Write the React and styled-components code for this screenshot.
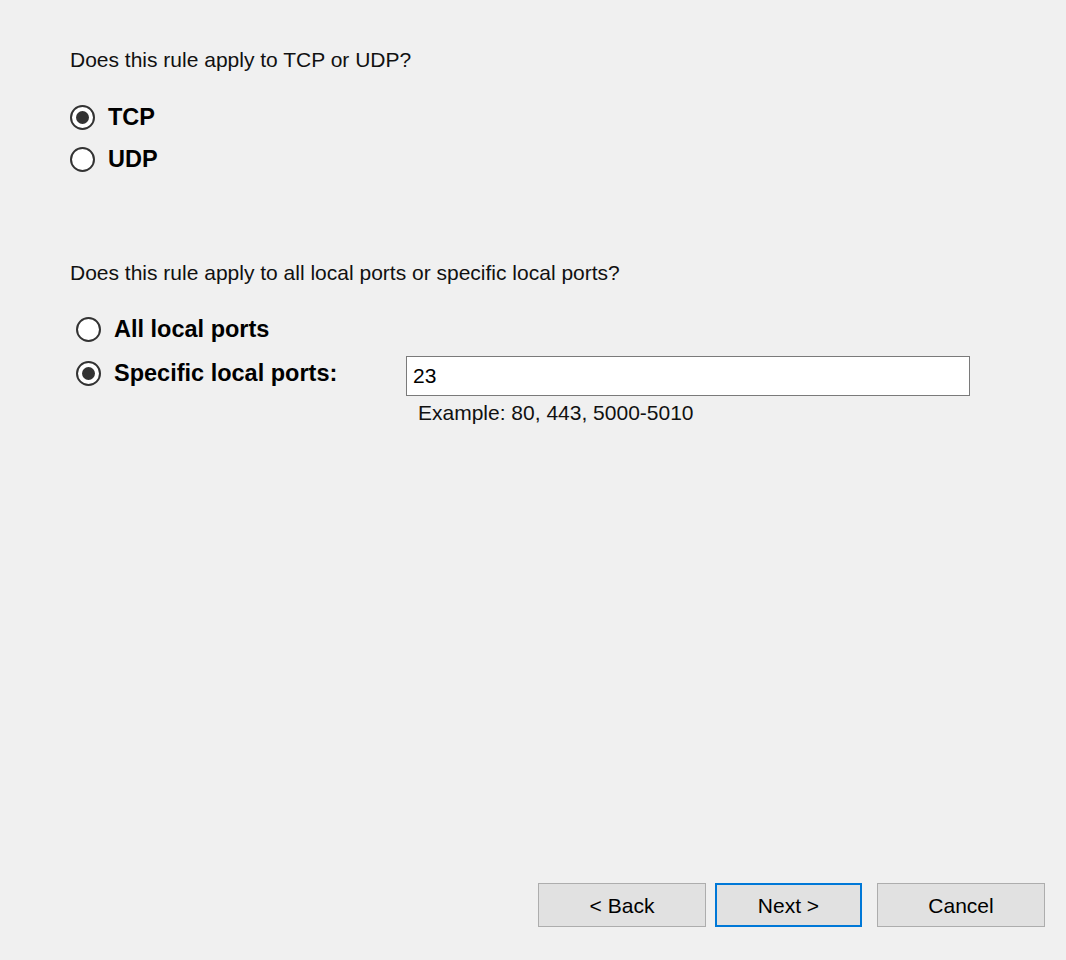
import React from "react";
import styled, { createGlobalStyle } from "styled-components";

const Global = createGlobalStyle`
  html, body { margin: 0; padding: 0; background: #f0f0f0; }
  body { font-family: "Liberation Sans", Arial, sans-serif; color: #000; }
`;

const Page = styled.div`
  box-sizing: border-box;
  width: 1066px;
  height: 960px;
  background: #f0f0f0;
  display: flex;
  flex-direction: column;
  padding: 48px 21px 33px 70px;
`;

const Question = styled.div`
  font-size: 21px;
  line-height: 24px;
  color: #111;
  margin-top: ${(p) => p.$top || 0}px;
`;

const Group = styled.div`
  display: flex;
  flex-direction: column;
  margin-top: ${(p) => p.$top || 0}px;
  margin-left: ${(p) => p.$indent || 0}px;
`;

const Row = styled.div`
  display: flex;
  align-items: flex-start;
`;

const RadioLabel = styled.label`
  display: flex;
  align-items: center;
  gap: 13px;
  height: ${(p) => p.$h}px;
  width: ${(p) => (p.$w ? `${p.$w}px` : "auto")};
  font-size: 23.5px;
  font-weight: bold;
  line-height: 28px;
  color: #000;
  flex-shrink: 0;
`;

const Circle = styled.span`
  box-sizing: border-box;
  width: 25px;
  height: 25px;
  border-radius: 50%;
  border: 2px solid #333;
  background: #fff;
  display: flex;
  align-items: center;
  justify-content: center;
  flex-shrink: 0;
  &::after {
    content: "";
    display: ${(p) => (p.$checked ? "block" : "none")};
    width: 13px;
    height: 13px;
    border-radius: 50%;
    background: #333;
  }
`;

const PortColumn = styled.div`
  display: flex;
  flex-direction: column;
  margin-top: 5px;
`;

const PortInput = styled.div`
  box-sizing: border-box;
  width: 564px;
  height: 40px;
  background: #fff;
  border: 1px solid #7a7a7a;
  font-size: 21px;
  line-height: 38px;
  padding-left: 6px;
  color: #000;
`;

const Hint = styled.div`
  font-size: 21px;
  line-height: 24px;
  color: #111;
  padding-left: 12px;
  margin-top: 5px;
`;

const ButtonBar = styled.div`
  margin-top: auto;
  display: flex;
  justify-content: flex-end;
  align-items: center;
`;

const Button = styled.div`
  box-sizing: border-box;
  width: ${(p) => p.$w}px;
  height: 44px;
  margin-left: ${(p) => p.$ml || 0}px;
  background: #e1e1e1;
  border: ${(p) => (p.$default ? "2px solid #0078d7" : "1px solid #adadad")};
  display: flex;
  align-items: center;
  justify-content: center;
  font-size: 21px;
  color: #000;
  padding-top: 1px;
`;

function Radio({ checked, label, h, w }) {
  return (
    <RadioLabel $h={h} $w={w}>
      <Circle $checked={checked} />
      {label}
    </RadioLabel>
  );
}

export default function App() {
  return (
    <>
      <Global />
      <Page>
        <Question>Does this rule apply to TCP or UDP?</Question>
        <Group $top={24}>
          <Radio checked label="TCP" h={42} />
          <Radio label="UDP" h={42} />
        </Group>

        <Question $top={81}>
          Does this rule apply to all local ports or specific local ports?
        </Question>
        <Group $top={22} $indent={6}>
          <Radio label="All local ports" h={44} />
          <Row>
            <Radio checked label="Specific local ports:" h={44} w={330} />
            <PortColumn>
              <PortInput>23</PortInput>
              <Hint>Example: 80, 443, 5000-5010</Hint>
            </PortColumn>
          </Row>
        </Group>

        <ButtonBar>
          <Button $w={168}>&lt; Back</Button>
          <Button $w={147} $ml={9} $default>
            Next &gt;
          </Button>
          <Button $w={168} $ml={15}>
            Cancel
          </Button>
        </ButtonBar>
      </Page>
    </>
  );
}
